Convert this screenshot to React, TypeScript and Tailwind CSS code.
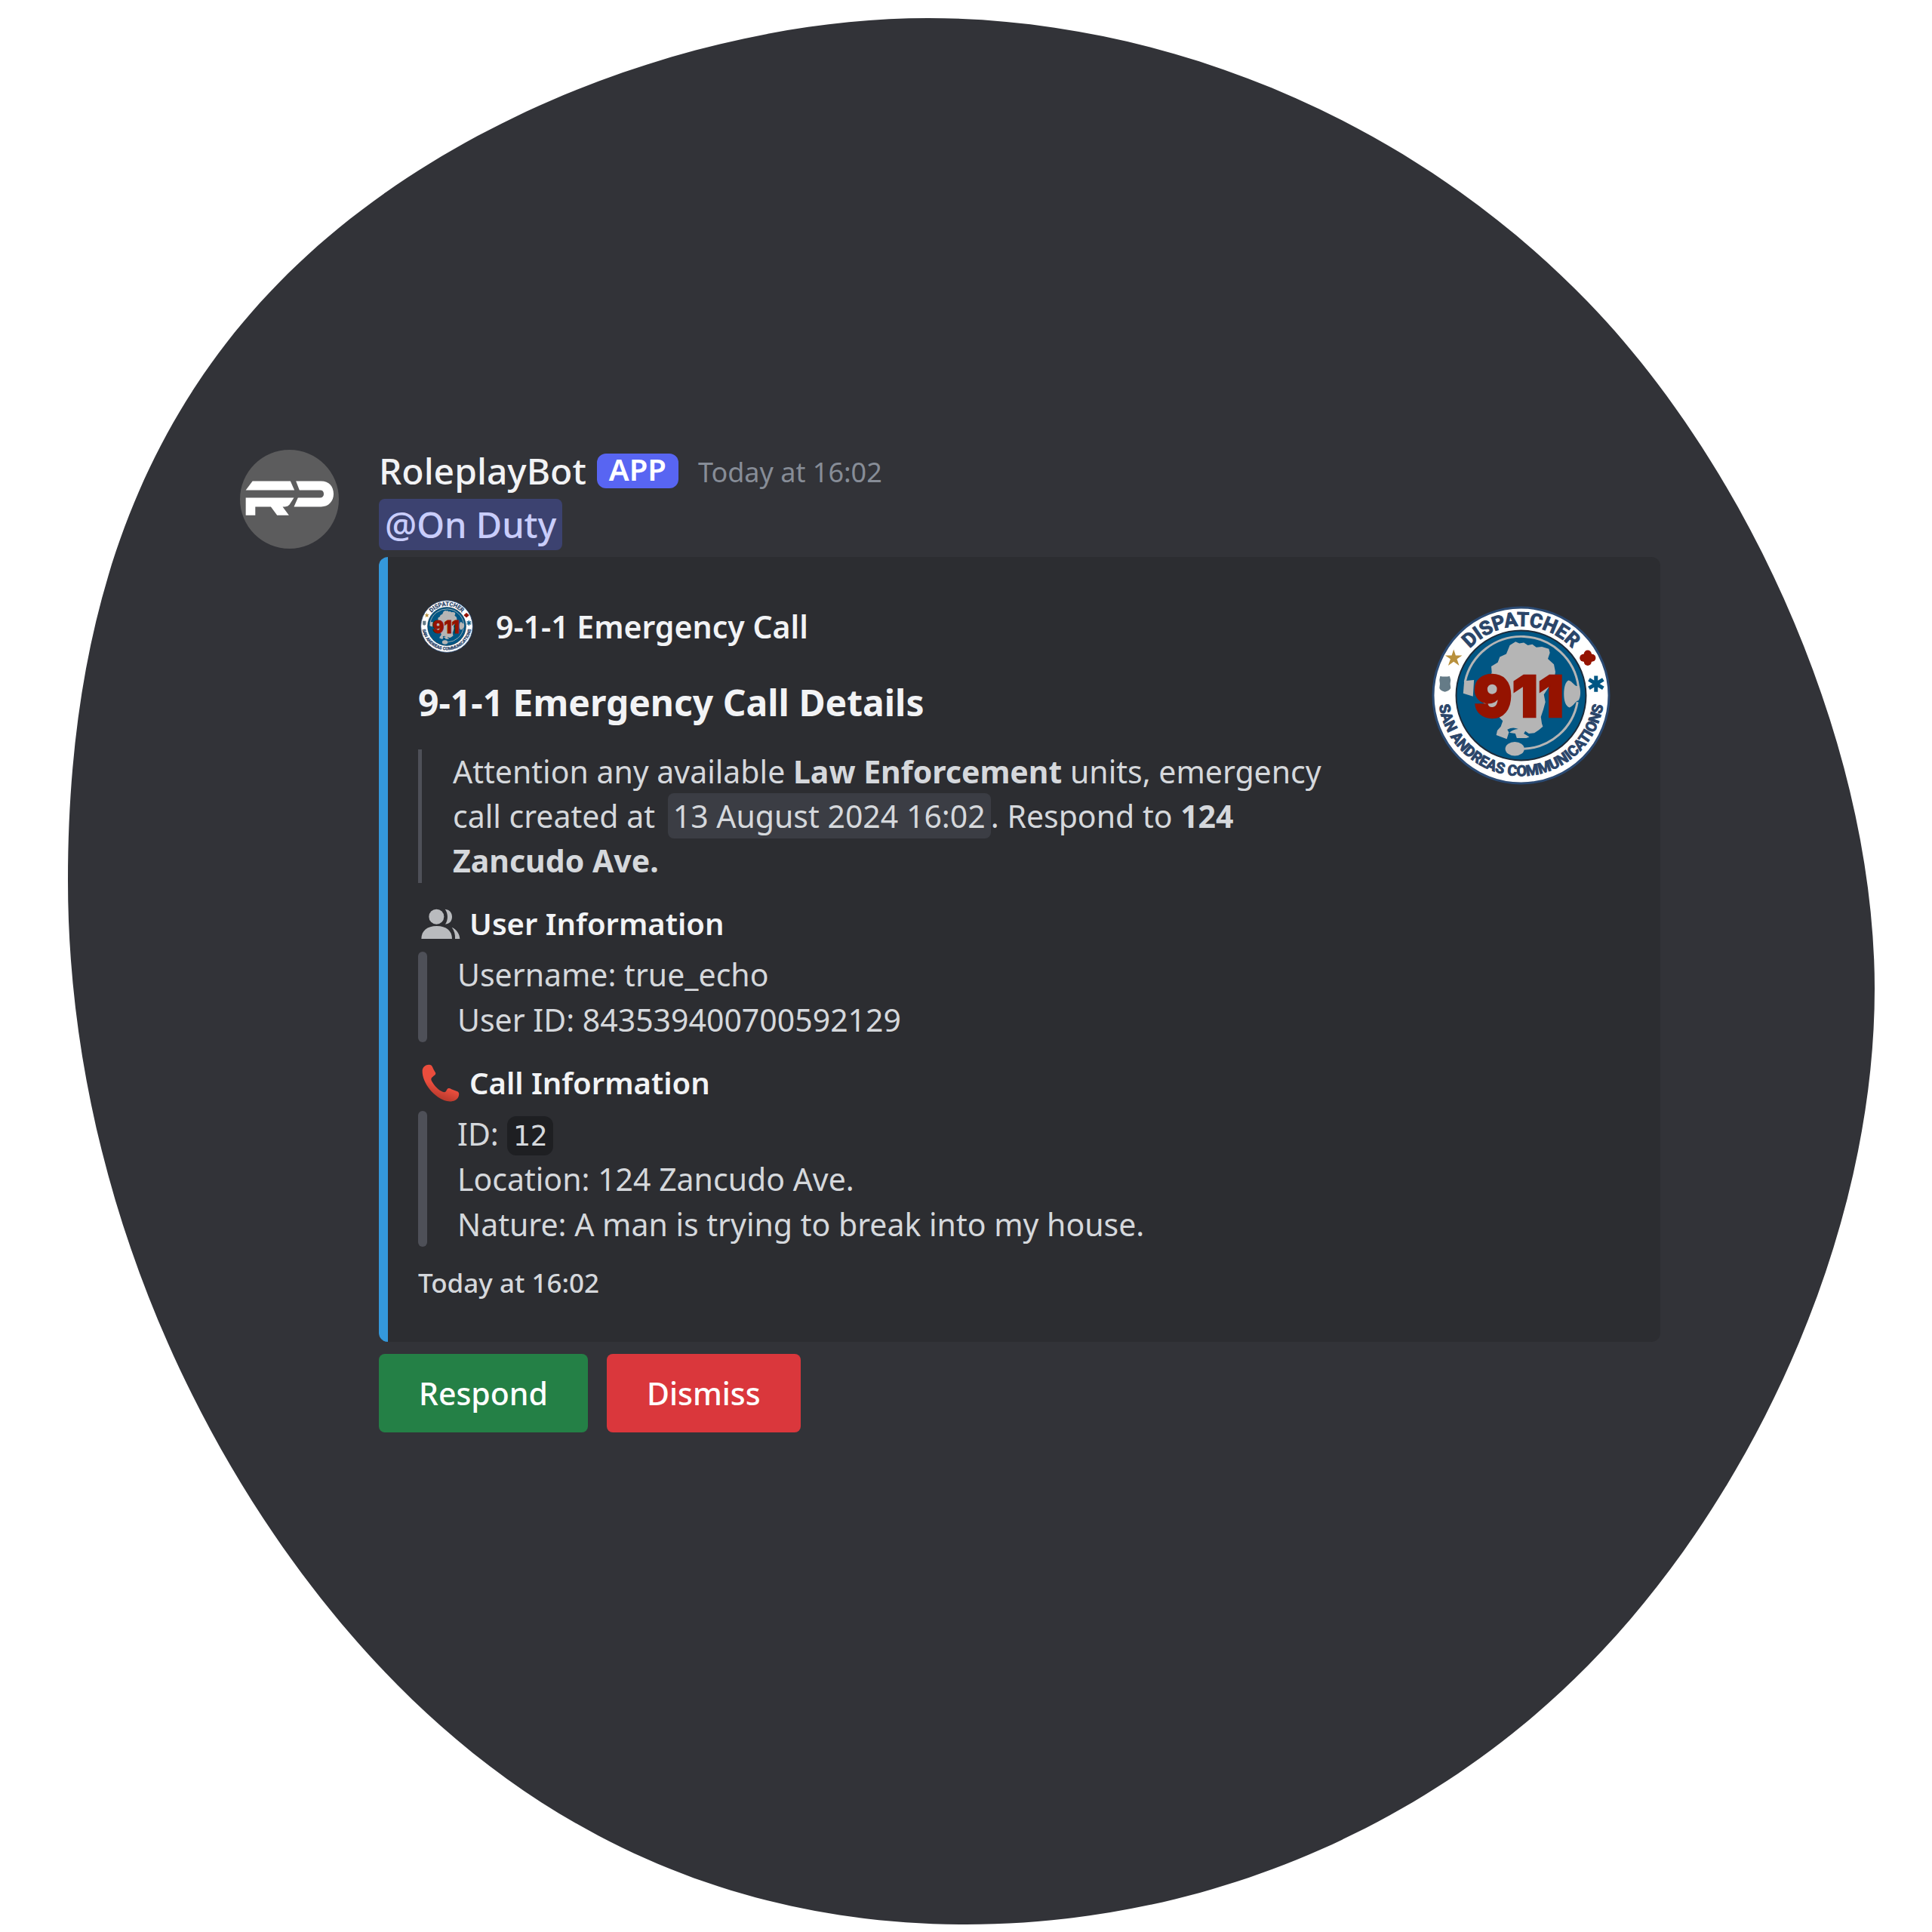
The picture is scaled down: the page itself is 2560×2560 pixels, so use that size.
import type { ReactNode } from "react";

interface FieldProps {
  icon: ReactNode;
  title: string;
  children: ReactNode;
}

function BlobBackground() {
  return (
    <svg
      className="absolute inset-0 h-full w-full"
      viewBox="0 0 2560 2560"
      preserveAspectRatio="none"
      aria-hidden="true"
    >
      <path
        fill="#323338"
        d="M90 1167C90 800 195 510 449 302C669 122 976 24 1230 24C1530 24 1861 149 2104 400C2319 622 2484 990 2484 1310C2484 1640 2319 1989 2104 2207C1889 2425 1590 2550 1280 2550C970 2550 691 2428 465 2166C245 1911 90 1547 90 1167Z"
      />
    </svg>
  );
}

function BotAvatar() {
  return (
    <svg className="size-[131px] shrink-0" viewBox="55 45 394 394" role="img" aria-label="RoleplayBot">
      <circle cx="252" cy="242" r="197" fill="#5c5c5d" />
      <g fill="#ffffff">
        <path d="M105 170H256L272 206H78Z" />
        <path d="M78 236H270L252 264Q246 272 234 272H225L250 306H203L178 272H116V306H78Z" />
        <path d="M278 170H378C410 170 428 192 428 221C428 250 408 272 378 272H270L286 236H374C384 236 389 230 389 221C389 212 384 206 374 206H292Z" />
      </g>
    </svg>
  );
}

// id keeps the arc references unique, the badge is rendered twice
function DispatchLogo({ id, className }: { id: string; className: string }) {
  return (
    <svg className={className} viewBox="112 97 714 714" role="img" aria-label="San Andreas Communications Dispatcher">
      <defs>
        <path id={`${id}-top`} d="M193 453A276 276 0 0 1 745 453" />
        <path id={`${id}-bottom`} d="M141 400A331 331 0 1 0 797 400" />
      </defs>
      <circle cx="469" cy="454" r="351" fill="#ffffff" stroke="#2b4a73" strokeWidth="9" />
      <circle cx="469" cy="454" r="259" fill="#005684" stroke="#1d2b3a" strokeWidth="6" />
      <g fill="none" stroke="#b5b5b5" strokeWidth="9">
        <path d="M245 400A230 230 0 0 1 698 420" />
        <path d="M694 480A226 226 0 0 1 480 667" />
      </g>
      <g fill="#b5b5b5">
        <path d="M242 396L281 392L277 458L238 446Z" />
        <path d="M658 394C672 396 678 412 690 416H702C708 436 707 462 698 474C684 476 680 496 662 502C646 496 640 474 640 448C640 422 646 400 658 394Z" />
        <ellipse cx="444" cy="667" rx="38" ry="28" />
        <path d="M447 239L462 246L480 243L496 254L514 250L530 262L552 260L580 268L584 284L576 308L600 330L606 360L600 400L580 420L560 450L566 480L558 510L548 540L552 566L556 578L540 592L522 604L500 606L486 596L480 606L502 620L490 624L452 624L446 606L420 602L412 628L396 622L370 612L374 594L388 578L396 556L384 544L378 520L336 502L316 480L322 440L340 400L352 362L350 338L376 322L384 300L410 288L424 254Z" />
      </g>
      <path d="M414 590Q436 578 458 588Q432 590 422 604Z" fill="#005684" />
      <text
        x="459"
        y="541"
        fill="#951300"
        stroke="#951300"
        strokeWidth="8"
        fontFamily="Inter, sans-serif"
        fontWeight="900"
        fontSize="228"
        textAnchor="middle"
      >
        911
      </text>
      <g fill="#2b4569" stroke="#2b4569" strokeWidth="3" fontFamily="Roboto, sans-serif" fontWeight="700" textAnchor="middle">
        <text fontSize="78">
          <textPath href={`#${id}-top`} startOffset="50%">DISPATCHER</textPath>
        </text>
        <text fontSize="59">
          <textPath href={`#${id}-bottom`} startOffset="50%">SAN ANDREAS COMMUNICATIONS</textPath>
        </text>
      </g>
      <path d="M200 270L208 294H234L213 309L222 335L200 319L178 335L187 309L166 294H192Z" fill="#b8903c" />
      <path d="M146 377Q165 381 184 377L188 392Q184 406 188 424Q186 434 165 440Q144 434 143 424Q147 406 143 392Z" fill="#657b87" />
      <g fill="#951300">
        <circle cx="735" cy="288" r="15" />
        <circle cx="735" cy="320" r="15" />
        <circle cx="718" cy="304" r="15" />
        <circle cx="752" cy="304" r="15" />
        <circle cx="735" cy="304" r="22" />
      </g>
      <path d="M768 376V440M740 390L797 425M797 390L740 425" stroke="#005684" strokeWidth="15" />
    </svg>
  );
}

function UsersIcon() {
  return (
    <svg className="h-[42px] w-[52px]" viewBox="84 45 156 126" fill="#b9bbbe" aria-hidden="true">
      <circle cx="145" cy="80" r="30" />
      <path d="M179 50C197 52 207 64 207 80C207 97 197 108 180 110C192 92 192 68 179 50Z" />
      <path d="M85 168C85 136 108 117 146 117C184 117 207 136 207 168Z" />
      <path d="M206 122C226 132 237 148 238 168H219C220 150 216 136 206 122Z" />
    </svg>
  );
}

function PhoneIcon() {
  return (
    <svg className="h-[52px] w-[52px]" viewBox="84 655 156 158" aria-hidden="true">
      <defs>
        <linearGradient id="phone-red" x1="0.7" y1="0.3" x2="0.45" y2="1">
          <stop offset="0.45" stopColor="#ea4d3d" />
          <stop offset="1" stopColor="#ac3529" />
        </linearGradient>
      </defs>
      <path
        fill="url(#phone-red)"
        d="M88 684C89 670 101 660 115 660C126 660 129 669 133 679L141 693C143 701 137 702 131 708C122 714 122 720 127 729C138 748 154 764 170 770C179 773 183 769 186 762C190 753 198 754 205 759L229 768C237 772 237 781 233 790C226 805 207 811 187 807C140 797 86 736 88 684Z"
      />
    </svg>
  );
}

function Quote({ children }: { children: ReactNode }) {
  return (
    <blockquote className="flex gap-10">
      <span className="w-3 shrink-0 rounded-full bg-[#4e5058]" />
      <div className="leading-[60px]">{children}</div>
    </blockquote>
  );
}

function Field({ icon, title, children }: FieldProps) {
  return (
    <section className="mt-6">
      <h3 className="mb-[7px] flex items-center gap-3 pl-1 text-[40px] leading-[60px] font-semibold text-[#f2f3f5]">
        {icon}
        {title}
      </h3>
      <Quote>{children}</Quote>
    </section>
  );
}

function Embed() {
  return (
    <article className="flex items-start gap-[110px] rounded-xl border-l-[12px] border-[#3498db] bg-[#2c2d31] pt-[57px] pr-[66px] pb-[54px] pl-10 text-[41px] text-[#d5d8dc]">
      <div className="min-w-0 flex-1">
        <div className="flex items-center gap-[30px] pl-[3px]">
          <DispatchLogo id="author" className="size-[70px] shrink-0" />
          <span className="leading-[60px] font-semibold text-[#f2f3f5]">9-1-1 Emergency Call</span>
        </div>
        <h2 className="mt-[34px] text-[48px] leading-[64px] font-bold text-[#f2f3f5]">
          9-1-1 Emergency Call Details
        </h2>
        <blockquote className="mt-[30px] flex gap-[41px]">
          <span className="w-[5px] shrink-0 bg-[#4e5058]" />
          <p className="leading-[59px]">
            Attention any available <strong>Law Enforcement</strong> units, emergency call created at{" "}
            <time className="ml-1.5 rounded-lg bg-[#3b3d44] px-[7px] py-0.5 whitespace-nowrap" dateTime="2024-08-13T16:02">
              13 August 2024 16:02
            </time>
            . Respond to <strong>124 Zancudo Ave.</strong>
          </p>
        </blockquote>

        <Field icon={<UsersIcon />} title="User Information">
          <p>Username: true_echo</p>
          <p>User ID: 843539400700592129</p>
        </Field>
        <Field icon={<PhoneIcon />} title="Call Information">
          <p>
            ID:{" "}
            <code className="rounded-xl bg-[#1e1f22] px-2 py-1 font-['DejaVu_Sans_Mono',monospace] text-[38px] leading-none">
              12
            </code>
          </p>
          <p>Location: 124 Zancudo Ave.</p>
          <p>Nature: A man is trying to break into my house.</p>
        </Field>

        <footer className="mt-6 text-[35px] leading-[48px] font-medium">Today at 16:02</footer>
      </div>
      <DispatchLogo id="thumb" className="mt-2 size-[237px] shrink-0" />
    </article>
  );
}

export default function App() {
  return (
    <main className="relative min-h-screen bg-white font-['Noto_Sans',sans-serif]">
      <BlobBackground />
      <div className="relative flex gap-[53px] pt-[596px] pr-[360px] pb-16 pl-[318px]">
        <BotAvatar />
        <div className="min-w-0 flex-1">
          <header className="flex items-center leading-[56px]">
            <span className="text-[48px] font-medium text-[#f2f3f5]">RoleplayBot</span>
            <span className="ml-3.5 rounded-xl bg-[#5865f2] px-4 pb-1 text-[40px] leading-[42px] font-semibold text-white">
              APP
            </span>
            <time className="mt-1 ml-[26px] text-[36px] leading-[52px] text-[#878d97]">Today at 16:02</time>
          </header>
          <div className="my-[9px] flex">
            <a href="#on-duty" className="rounded-lg bg-[#3c4270] px-2 text-[47px] leading-[68px] font-medium text-[#c9cdfb]">
              @On Duty
            </a>
          </div>
          <Embed />
          <div className="mt-4 flex gap-[25px] text-[41px] leading-[60px] font-medium text-white">
            <button type="button" className="rounded-lg bg-[#248046] px-[53px] py-[22px]">
              Respond
            </button>
            <button type="button" className="rounded-lg bg-[#da373c] px-[53px] py-[22px]">
              Dismiss
            </button>
          </div>
        </div>
      </div>
    </main>
  );
}
